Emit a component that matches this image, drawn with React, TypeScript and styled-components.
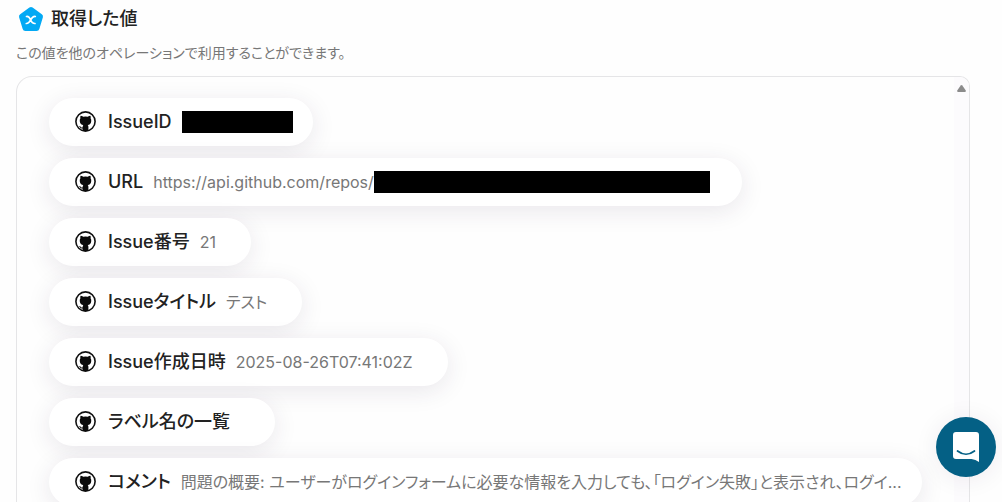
import React from "react";
import styled, { createGlobalStyle } from "styled-components";

const GlobalStyle = createGlobalStyle`
  *, *::before, *::after { box-sizing: border-box; }
  html, body, #root { height: 100%; }
  body {
    margin: 0;
    overflow: hidden;
    background: #fefefe;
    color: #222;
    font-family: Inter, "Noto Sans CJK JP", sans-serif;
    font-feature-settings: "palt";
  }
`;

const Page = styled.main`
  height: 100%;
  display: flex;
  flex-direction: column;
  padding: 6px 32px 0 16px;
`;

const Header = styled.header`
  display: flex;
  align-items: center;
  gap: 7px;
  height: 26px;
  padding-left: 2px;
`;

const Title = styled.h1`
  margin: 0;
  font-size: 18px;
  line-height: 24px;
  font-weight: 500;
`;

const Description = styled.p`
  margin: 11px 0 13px;
  font-size: 14px;
  line-height: 20px;
  color: #777;
`;

const Panel = styled.section`
  flex: 1;
  min-height: 0;
  display: flex;
  overflow: hidden;
  border: 1px solid #e5e5e7;
  border-bottom: 0;
  border-radius: 16px 10px 0 0;
`;

const List = styled.ul`
  flex: 1;
  min-width: 0;
  margin: 0;
  padding: 21px 32px 0;
  list-style: none;
  display: flex;
  flex-direction: column;
  align-items: flex-start;
  gap: 12px;
`;

const Pill = styled.li<{ $end?: number }>`
  flex: none;
  display: flex;
  align-items: center;
  height: 48px;
  padding: 0 ${(p) => p.$end ?? 35}px 0 26px;
  border-radius: 24px;
  background: #fff;
  box-shadow: 0 5px 24px rgba(50, 30, 70, 0.1);
  white-space: nowrap;
`;

const Label = styled.span`
  margin: 0 10px 0 11px;
  font-size: 18px;
  line-height: 24px;
  font-weight: 500;
`;

const Value = styled.span`
  font-size: 16px;
  line-height: 24px;
  color: #777;
`;

const Redaction = styled.span<{ $width: number }>`
  width: ${(p) => p.$width}px;
  height: 22px;
  background: #000;
`;

const ScrollTrack = styled.div`
  flex: none;
  width: 15px;
  padding-top: 8px;
  display: flex;
  justify-content: center;
  align-items: flex-start;
  background: #fcfbfd;
`;

const ChatButton = styled.button`
  position: fixed;
  right: 6px;
  bottom: 25px;
  width: 60px;
  height: 60px;
  padding: 0;
  border: 0;
  border-radius: 50%;
  display: grid;
  place-items: center;
  background: #046085;
  box-shadow: 0 2px 24px rgba(50, 30, 70, 0.08);
  cursor: pointer;
`;

const PentagonIcon = () => (
  <svg width="26" height="26" viewBox="0 0 26 26" aria-hidden="true">
    <path
      d="M11.400 1.600Q13 .6 14.600 1.600L23.800 8.200Q25.400 9.400 24.900 11.200L21.400 22.800Q20.800 25 18.600 25H7.400Q5.200 25 4.600 22.800L1.100 11.200Q.6 9.400 2.200 8.200Z"
      fill="#03a9f4"
    />
    <path
      d="M8.500 10.500C13.500 9.500 11.500 18 17 17.500M17.300 10.500C12.500 9.500 13 18 8.300 17.500"
      fill="none"
      stroke="#fff"
      strokeWidth="1.700"
      strokeLinecap="round"
    />
  </svg>
);

const OctocatIcon = () => (
  <svg width="22" height="22" viewBox="0 0 22 22" aria-hidden="true">
    <circle cx="10.500" cy="10.500" r="9.600" fill="#fff" stroke="#111" strokeWidth="1.600" />
    <path
      d="M5.600 4.700Q7 4.800 8.300 5.800Q10.500 5.300 12.700 5.800Q14 4.800 15.400 4.700Q16 6 15.600 7.300Q16.600 8.600 16.200 10.500Q15.700 13.600 12.700 14Q13.400 14.700 13.400 15.700V19.600Q10.500 20.600 7.600 19.600V17.400Q5.700 17.700 4.900 16.200Q4.500 15.400 3.900 15Q5.100 14.700 5.900 15.900Q6.600 16.800 7.700 16.300Q7.600 14.800 8.300 14Q5.300 13.600 4.800 10.500Q4.400 8.600 5.400 7.300Q5 6 5.600 4.700Z"
      fill="#0a0a0a"
    />
  </svg>
);

const ScrollArrow = () => (
  <svg width="9" height="7" viewBox="0 0 9 7" aria-hidden="true">
    <path d="M3.700.4Q4.500-.3 5.300.4L8.800 5.600Q9 7 8 7H1Q0 7 .2 5.600Z" fill="#8b8b8b" />
  </svg>
);

const ChatIcon = () => (
  <svg width="28" height="32" viewBox="0 0 28 32" aria-hidden="true">
    <path d="M4 1H24Q27 1 27 4V31Q23.500 28.500 19.500 28H4Q1 28 1 25V4Q1 1 4 1Z" fill="#fff" />
    <path
      d="M5.500 20Q14 26.500 22.500 20"
      fill="none"
      stroke="#046085"
      strokeWidth="1.700"
      strokeLinecap="round"
    />
  </svg>
);

type Field = { label: string; value?: string; hidden?: number; end?: number };

const fields: Field[] = [
  { label: "IssueID", hidden: 111, end: 20 },
  { label: "URL", value: "https://api.github.com/repos/", hidden: 336, end: 32 },
  { label: "Issue番号", value: "21" },
  { label: "Issueタイトル", value: "テスト" },
  { label: "Issue作成日時", value: "2025-08-26T07:41:02Z" },
  { label: "ラベル名の一覧" },
  {
    label: "コメント",
    value:
      "問題の概要: ユーザーがログインフォームに必要な情報を入力しても、「ログイン失敗」と表示され、ログイ...",
    end: 20,
  },
];

export default function App() {
  return (
    <>
      <GlobalStyle />
      <Page>
        <Header>
          <PentagonIcon />
          <Title>取得した値</Title>
        </Header>
        <Description>この値を他のオペレーションで利用することができます。</Description>
        <Panel>
          <List>
            {fields.map((f) => (
              <Pill key={f.label} $end={f.end}>
                <OctocatIcon />
                <Label>{f.label}</Label>
                {f.value && <Value>{f.value}</Value>}
                {f.hidden && <Redaction $width={f.hidden} />}
              </Pill>
            ))}
          </List>
          <ScrollTrack>
            <ScrollArrow />
          </ScrollTrack>
        </Panel>
      </Page>
      <ChatButton type="button" aria-label="チャットを開く">
        <ChatIcon />
      </ChatButton>
    </>
  );
}
